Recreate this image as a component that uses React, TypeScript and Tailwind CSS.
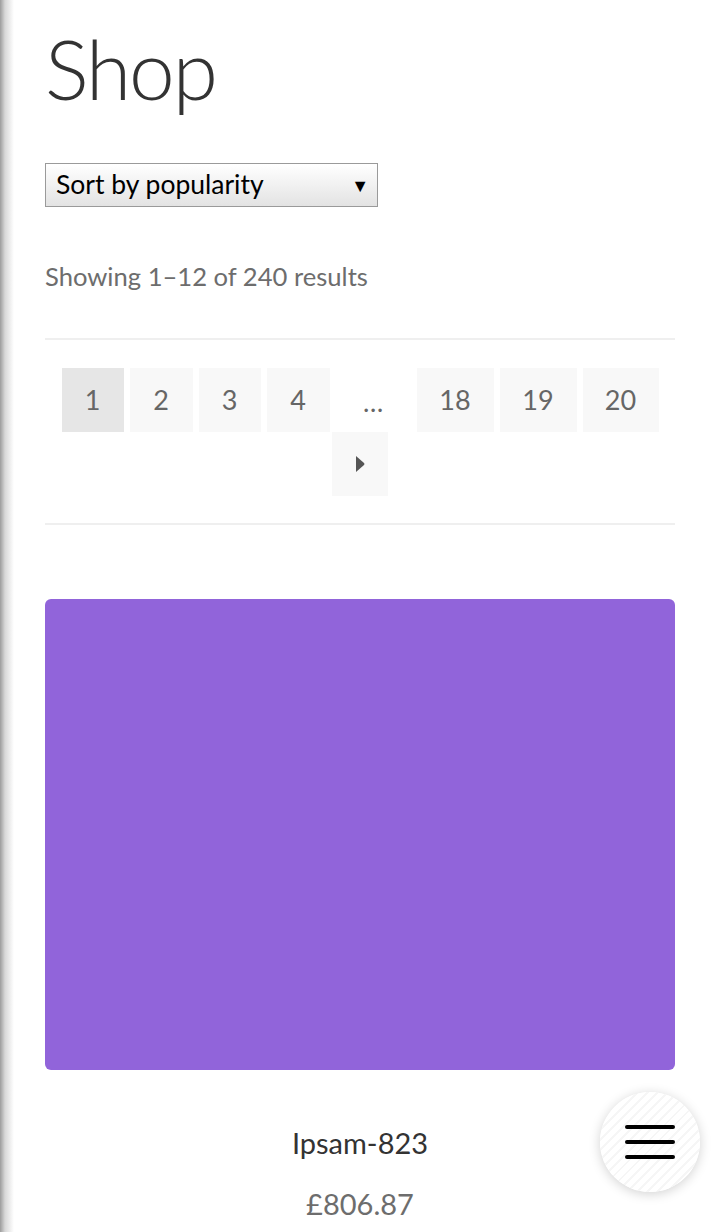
import React from "react";

const pages = [
  { label: "1", w: "w-[62px]", current: true },
  { label: "2", w: "w-[63px]" },
  { label: "3", w: "w-[62px]" },
  { label: "4", w: "w-[63px]" },
  { label: "…", w: "w-[75px]", dots: true },
  { label: "18", w: "w-[77px]" },
  { label: "19", w: "w-[77px]" },
  { label: "20", w: "w-[76px]" },
];

const Pagination = () => {
  return (
    <nav className="flex flex-wrap justify-center gap-x-[6px]">
      {pages.map((p) => (
        <span
          key={p.label}
          className={`${p.w} h-16 flex items-center justify-center text-[27px] text-[#666] ${
            p.current ? "bg-[#e6e6e6]" : p.dots ? "bg-white pt-[4px]" : "bg-[#f8f8f8]"
          }`}
        >
          {p.label}
        </span>
      ))}
      <span className="w-[56px] h-16 flex items-center justify-center bg-[#f8f8f8]">
        <svg width="10" height="16" viewBox="0 0 10 16">
          <path d="M1 0 L9 7 Q10 8 9 9 L1 16 Z" fill="#555" />
        </svg>
      </span>
    </nav>
  );
};

export default function App() {
  return (
    <div
      className="relative min-h-screen bg-[linear-gradient(to_right,#9c9c9c_0px,#d8d8d8_5px,#ffffff_14px)] px-[45px] overflow-hidden"
      style={{ fontFamily: '"Lato", "Open Sans", sans-serif' }}
    >
      <h1 className="pt-[20px] text-[82px] leading-[96px] font-light text-[#333] tracking-[-2px]">
        Shop
      </h1>

      <div className="mt-[47px] w-[333px] h-[44px] border border-[#9a9a9a] bg-gradient-to-b from-white to-[#e3e3e3] flex items-center justify-between pl-[10px] pr-[8px] text-[26.5px] text-black">
        <span>Sort by popularity</span>
        <span className="text-[18px]">▼</span>
      </div>

      <p className="mt-[50px] text-[25.6px] leading-[38px] text-[#6d6d6d]">
        Showing 1–12 of 240 results
      </p>

      <div className="mt-[43px] border-t-2 border-[#efefef]" />

      <div className="pt-[28px] pb-[27px]">
        <Pagination />
      </div>

      <div className="border-t-2 border-[#efefef]" />

      <div className="mt-[74px] h-[471px] rounded-[6px] bg-[#9164da]" />

      <h2 className="mt-[53px] text-center text-[29px] leading-[40px] text-[#333]">
        Ipsam-823
      </h2>
      <p className="mt-[21px] text-center text-[29px] leading-[40px] text-[#6d6d6d]">
        £806.87
      </p>

      <button className="absolute left-[600px] top-[1092px] w-[100px] h-[100px] rounded-full shadow-[0_2px_12px_rgba(0,0,0,0.18)] flex flex-col items-center justify-center gap-[11px] bg-[repeating-linear-gradient(135deg,#ffffff_0px,#ffffff_5px,#f6f6f6_5px,#f6f6f6_7px)]">
        <span className="block w-[50px] h-[4px] rounded-full bg-black" />
        <span className="block w-[50px] h-[4px] rounded-full bg-black" />
        <span className="block w-[50px] h-[4px] rounded-full bg-black" />
      </button>
    </div>
  );
}
